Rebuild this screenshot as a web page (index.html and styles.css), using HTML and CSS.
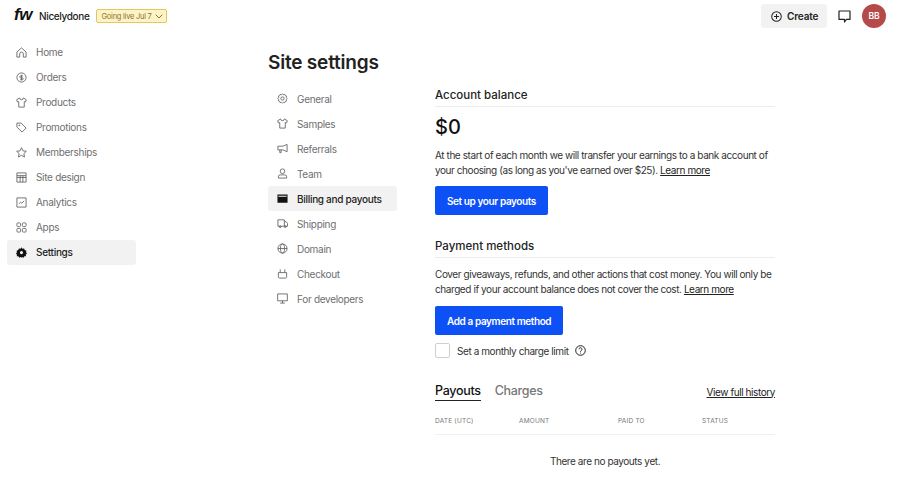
FILE: index.html
```html
<!DOCTYPE html>
<html lang="en">
<head>
    <meta charset="UTF-8">
    <title>Site settings</title>
    <link rel="stylesheet" href="styles.css">
</head>
<body>
    <header class="topbar">
        <div class="brand">
            <span class="logo">fw</span>
            <span class="shop-name">Nicelydone</span>
            <span class="live-badge">Going live Jul 7
                <svg width="8" height="5" viewBox="0 0 8 5" fill="none" stroke="currentColor" stroke-width="1"><path d="M.7.7 4 4l3.300-3.300"/></svg>
            </span>
        </div>
        <div class="top-actions">
            <button class="create-btn">
                <svg width="11" height="11" viewBox="0 0 12 12" fill="none" stroke="#222" stroke-width="1.100"><circle cx="6" cy="6" r="5.200"/><path d="M6 3.300v5.400M3.300 6h5.400"/></svg>
                Create
            </button>
            <svg class="chat-icon" width="13" height="13" viewBox="0 0 13 13" fill="none" stroke="#222" stroke-width="1.200" stroke-linejoin="round"><path d="M1 1h11v8.400H8.400L6.500 12V9.400H1z"/></svg>
            <span class="avatar">BB</span>
        </div>
    </header>

    <div class="layout">
        <nav class="sidebar">
            <a class="nav-item"><svg class="icon" viewBox="0 0 12 12"><path d="M1 11V5.500L6 1l5 4.500V11H8V7.500a2 2 0 0 0-4 0V11z"/></svg>Home</a>
            <a class="nav-item"><svg class="icon" viewBox="0 0 12 12"><circle cx="6" cy="6" r="5"/><path d="M7.700 4.300H5.200a1 1 0 0 0 0 2.100h1.600a1 1 0 0 1 0 2.100H4.300M6 3v6"/></svg>Orders</a>
            <a class="nav-item"><svg class="icon" viewBox="0 0 12 12"><path d="M4 1 .7 3l.9 2.400L3 5v6h6V5l1.400.4.9-2.400L8 1a2 2 0 0 1-4 0z"/></svg>Products</a>
            <a class="nav-item"><svg class="icon" viewBox="0 0 12 12"><path d="M1 1.200h4.400l5.600 5.400L6.600 11 1 5.500z"/><circle cx="3.600" cy="3.700" r=".5"/></svg>Promotions</a>
            <a class="nav-item"><svg class="icon" viewBox="0 0 12 12"><path d="m6 .8 1.600 3.400 3.700.5-2.700 2.500.7 3.700L6 9.100l-3.300 1.800.7-3.700L.7 4.700l3.700-.5z"/></svg>Memberships</a>
            <a class="nav-item"><svg class="icon" viewBox="0 0 12 12"><path d="M1 1h10v10H1zM1 4h10M4.500 4v7M7.500 4v7M1 6h10"/></svg>Site design</a>
            <a class="nav-item"><svg class="icon" viewBox="0 0 12 12"><path d="M1 1h10v10H1zM3.200 7.400l1.800-1.600 1.400 1 2.400-2.600"/></svg>Analytics</a>
            <a class="nav-item"><svg class="icon" viewBox="0 0 12 12"><rect x="1" y="1" width="4" height="4" rx="1"/><rect x="7" y="1" width="4" height="4" rx="1"/><rect x="1" y="7" width="4" height="4" rx="1"/><rect x="7" y="7" width="4" height="4" rx="1"/></svg>Apps</a>
            <a class="nav-item active"><svg class="icon solid" viewBox="0 0 12 12"><path fill-rule="evenodd" d="M6 .3 7 1.800l1.800-.2.7 1.700 1.800.7L11 5.800 12 7l-1.300 1.200.2 1.800-1.800.2-.8 1.500-1.600-.7L6 11.800l-1-.8-1.600.7-.8-1.500-1.800-.2.2-1.800L0 7l1-1.200-.3-1.800 1.800-.7.7-1.700L5 1.800zM6 4.400a1.700 1.700 0 1 0 0 3.400 1.700 1.700 0 0 0 0-3.400z"/></svg>Settings</a>
        </nav>

        <main class="page">
            <h1 class="page-title">Site settings</h1>
            <div class="page-body">
                <nav class="subnav">
                    <a class="nav-item"><svg class="icon" viewBox="0 0 12 12"><path d="M6 .8l1.100 1.100 1.500-.4.500 1.400 1.400.5-.4 1.500L11.200 6l-1.100 1.100.4 1.500-1.400.5-.5 1.400-1.500-.4L6 11.200l-1.100-1.100-1.500.4-.5-1.400-1.400-.5.4-1.500L.8 6l1.100-1.100-.4-1.500 1.400-.5.5-1.400 1.500.4z"/><circle cx="6" cy="6" r="1.800"/></svg>General</a>
                    <a class="nav-item"><svg class="icon" viewBox="0 0 12 12"><path d="M4 1 .7 3l.9 2.400L3 5v6h6V5l1.400.4.9-2.400L8 1a2 2 0 0 1-4 0z"/></svg>Samples</a>
                    <a class="nav-item"><svg class="icon" viewBox="0 0 12 12"><path d="M11 1.500v8L6.500 7.500H1V3.500h5.500zM3 7.500V10.500h1.500V7.500"/></svg>Referrals</a>
                    <a class="nav-item"><svg class="icon" viewBox="0 0 12 12"><circle cx="6" cy="3.500" r="2.500"/><path d="M1.500 11V9.500a2 2 0 0 1 2-2h5a2 2 0 0 1 2 2V11z"/></svg>Team</a>
                    <a class="nav-item active"><svg class="icon solid" viewBox="0 0 12 12"><path d="M.5 1.500h11v9H.5zM1.500 3v1h9V3z" fill-rule="evenodd"/></svg>Billing and payouts</a>
                    <a class="nav-item"><svg class="icon" viewBox="0 0 12 12"><path d="M1 2h7v7H1zM8 4h2l1.500 2v3H8"/><circle cx="3.500" cy="9.500" r="1"/><circle cx="9" cy="9.500" r="1"/></svg>Shipping</a>
                    <a class="nav-item"><svg class="icon" viewBox="0 0 12 12"><circle cx="6" cy="6" r="5"/><ellipse cx="6" cy="6" rx="2.200" ry="5"/><path d="M1 6h10"/></svg>Domain</a>
                    <a class="nav-item"><svg class="icon" viewBox="0 0 12 12"><path d="M1.500 5h9v4.500a1.500 1.500 0 0 1-1.500 1.500H3a1.500 1.500 0 0 1-1.500-1.500zM3.500 5V1.500M8.500 5V1.500"/></svg>Checkout</a>
                    <a class="nav-item"><svg class="icon" viewBox="0 0 12 12"><path d="M.7 1h10.600v7.500H.7zM6 8.500V11M3.500 11h5"/></svg>For developers</a>
                </nav>

                <div class="content">
                    <section class="block">
                        <h2 class="block-title">Account balance</h2>
                        <p class="balance">$0</p>
                        <p class="text">At the start of each month we will transfer your earnings to a bank account of your choosing (as long as you've earned over $25). <a class="link">Learn more</a></p>
                        <button class="primary-btn">Set up your payouts</button>
                    </section>

                    <section class="block methods">
                        <h2 class="block-title">Payment methods</h2>
                        <p class="text">Cover giveaways, refunds, and other actions that cost money. You will only be charged if your account balance does not cover the cost. <a class="link">Learn more</a></p>
                        <button class="primary-btn">Add a payment method</button>
                        <label class="check-row">
                            <span class="checkbox"></span>
                            Set a monthly charge limit
                            <svg class="help-icon" width="11" height="11" viewBox="0 0 11 11" fill="none" stroke="#222" stroke-width="1"><circle cx="5.500" cy="5.500" r="4.800"/><path d="M4 4.300a1.500 1.500 0 1 1 2.300 1.300c-.5.3-.8.6-.8 1.100M5.500 7.700v.8"/></svg>
                        </label>
                    </section>

                    <section class="history">
                        <div class="tabs">
                            <span class="tab current">Payouts</span>
                            <span class="tab">Charges</span>
                            <a class="link history-link">View full history</a>
                        </div>
                        <div class="table-head">
                            <span>DATE (UTC)</span>
                            <span>AMOUNT</span>
                            <span>PAID TO</span>
                            <span>STATUS</span>
                        </div>
                        <p class="empty">There are no payouts yet.</p>
                    </section>
                </div>
            </div>
        </main>
    </div>
</body>
</html>
```

FILE: styles.css
```css
html, body {
    height: 100%;
    overflow: hidden;
}

body {
    margin: 0;
    font-family: 'Inter', sans-serif;
    font-size: 10px;
    letter-spacing: -.42px;
    color: #222;
    background: #fff;
}

/* Barre du haut */
.topbar {
    height: 32px;
    display: flex;
    justify-content: space-between;
    align-items: center;
    padding: 0 14px;
}

.brand {
    display: flex;
    align-items: center;
}

.logo {
    width: 25px;
    font-family: 'Liberation Sans', sans-serif;
    font-size: 17px;
    line-height: 15px;
    font-weight: 700;
    font-style: italic;
    letter-spacing: -.5px;
    color: #111;
    margin-top: -3px;
}

.shop-name {
    font-size: 10px;
    font-weight: 500;
    letter-spacing: -.35px;
    color: #222;
    margin-right: 6px;
}

.live-badge {
    display: flex;
    align-items: center;
    gap: 3px;
    height: 12px;
    padding: 0 3px 0 5px;
    font-size: 7.500px;
    letter-spacing: -.25px;
    color: #8d7420;
    background: #fdf3c8;
    border: 1px solid #e3c85f;
    border-radius: 2px;
}

.top-actions {
    display: flex;
    align-items: center;
}

.create-btn {
    display: flex;
    align-items: center;
    gap: 5px;
    width: 66px;
    height: 24px;
    padding: 0 0 0 10px;
    font: 600 10px 'Inter', sans-serif;
    letter-spacing: -.15px;
    color: #222;
    background: #f2f2f2;
    border: none;
    border-radius: 3px;
}

.chat-icon {
    margin: 0 11px;
}

.avatar {
    width: 24px;
    height: 24px;
    display: flex;
    justify-content: center;
    align-items: center;
    font-size: 8.500px;
    font-weight: 600;
    letter-spacing: 0;
    color: #fff;
    background: #b54a4a;
    border-radius: 50%;
}

.layout {
    display: flex;
}

/* Menus */
.sidebar {
    width: 129px;
    margin: 7.500px 132px 0 7px;
    flex-shrink: 0;
}

.nav-item {
    display: flex;
    align-items: center;
    gap: 9px;
    height: 25px;
    padding-left: 9px;
    font-size: 10px;
    letter-spacing: -.3px;
    color: #6f6f6f;
    border-radius: 3px;
}

.nav-item.active {
    color: #222;
    font-weight: 500;
    background: #f2f2f2;
}

.icon {
    width: 11px;
    height: 11px;
    flex-shrink: 0;
    fill: none;
    stroke: #6a6a6a;
    stroke-width: 1;
}

.icon.solid {
    fill: #111;
    stroke: none;
}

.page {
    width: 507px;
}

.page-title {
    margin: 0;
    padding-top: 17px;
    height: 37px;
    font-size: 19px;
    line-height: 27px;
    font-weight: 600;
    letter-spacing: -.2px;
    color: #222;
}

.page-body {
    display: flex;
    gap: 38px;
}

.subnav {
    width: 129px;
    flex-shrink: 0;
}

/* Contenu */
.content {
    width: 340px;
    padding-top: 1px;
}

.block-title {
    margin: 0;
    padding: 1px 0 3px;
    font-size: 11.500px;
    line-height: 15px;
    font-weight: 500;
    letter-spacing: 0;
    color: #222;
    border-bottom: 1px solid #ececec;
}

.balance {
    margin: 8px 0 0;
    font-size: 20px;
    line-height: 24px;
    font-weight: 500;
    letter-spacing: 0;
    color: #111;
}

.text {
    margin: 9px 0 0;
    line-height: 15px;
    color: #333;
}

.link {
    color: #222;
    text-decoration: underline;
}

.primary-btn {
    display: block;
    margin-top: 8px;
    height: 29px;
    padding: 0 12px;
    font: 600 10px 'Inter', sans-serif;
    letter-spacing: -.4px;
    color: #fff;
    background: #0d50f5;
    border: none;
    border-radius: 2px;
}

.methods {
    margin-top: 23px;
}

.methods .primary-btn {
    margin-top: 9px;
}

.check-row {
    display: flex;
    align-items: center;
    gap: 7px;
    margin-top: 8px;
    color: #333;
}

.checkbox {
    width: 13px;
    height: 13px;
    border: 1px solid #cfcfcf;
    border-radius: 2px;
}

.help-icon {
    margin-left: -1px;
}

.history {
    margin-top: 24px;
}

.tabs {
    display: flex;
    align-items: center;
    gap: 14px;
}

.tab {
    padding-bottom: 1px;
    font-size: 12.500px;
    line-height: 17px;
    font-weight: 500;
    letter-spacing: -.3px;
    color: #777;
    border-bottom: 1px solid transparent;
}

.tab.current {
    color: #111;
    border-bottom-color: #222;
}

.history-link {
    margin-left: auto;
}

.table-head {
    display: grid;
    grid-template-columns: 84px 99px 84px 1fr;
    height: 34px;
    padding-top: 16px;
    box-sizing: border-box;
    font-size: 6.500px;
    letter-spacing: .2px;
    color: #777;
    border-bottom: 1px solid #f0f0f0;
}

.empty {
    margin: 20px 0 0;
    text-align: center;
    color: #333;
}
```
